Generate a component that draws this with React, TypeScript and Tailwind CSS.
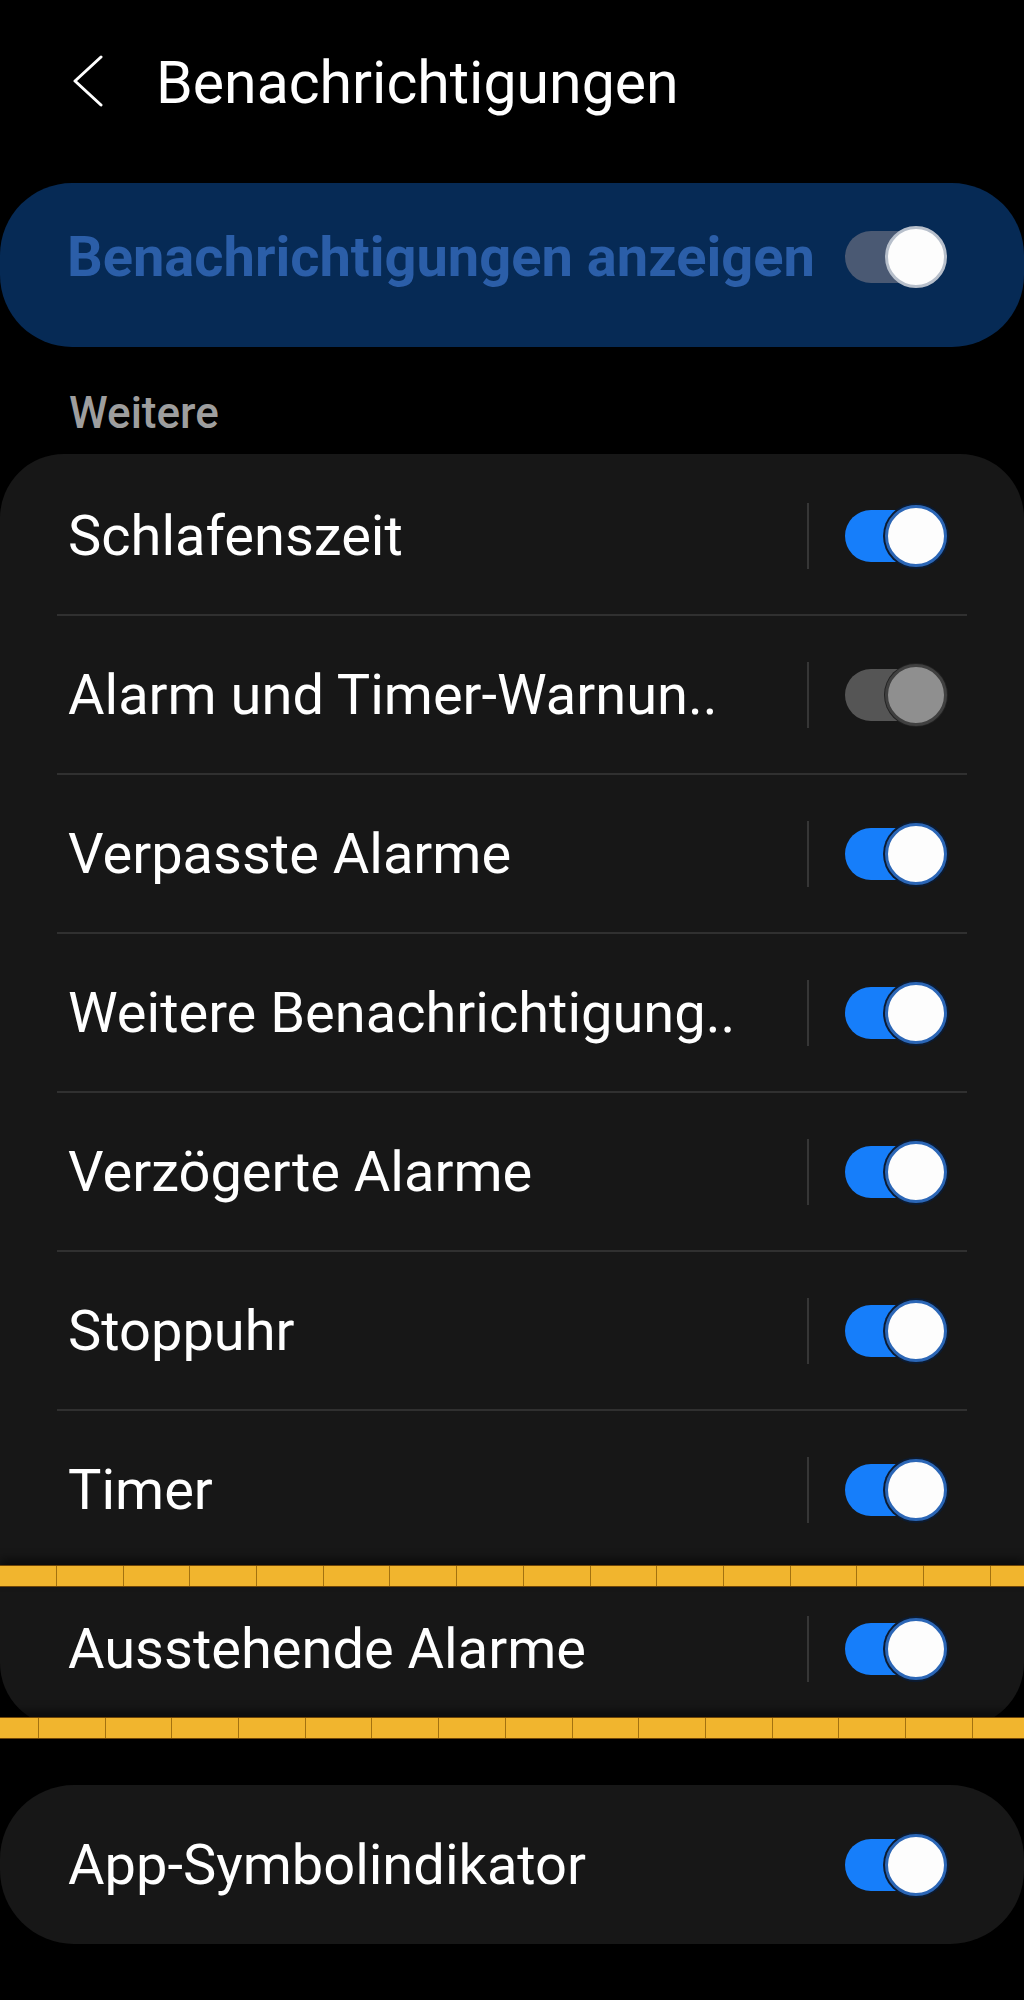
import React from 'react';

type ToggleKind = 'on' | 'off' | 'master';

const trackClass: Record<ToggleKind, string> = {
    on: 'bg-[#167efa]',
    off: 'bg-[#555555]',
    master: 'bg-[#4a5973]',
};

const thumbClass: Record<ToggleKind, string> = {
    on: 'bg-[#fdfdfd] border-[#2b66b6] shadow-[0_0_0_2px_#0c1b31]',
    off: 'bg-[#8f8f8f] border-[#404040] shadow-[0_0_0_1px_#222222]',
    master: 'bg-[#fdfdfd] border-[#b7bfcb]',
};

function Toggle({ kind }: { kind: ToggleKind }) {
    return (
        <div className="relative w-[102px] h-[62px] shrink-0">
            <div className={`absolute left-0 top-[5px] w-[96px] h-[52px] rounded-full ${trackClass[kind]}`} />
            <div className={`absolute right-0 top-0 w-[62px] h-[62px] rounded-full border-[3px] ${thumbClass[kind]}`} />
        </div>
    );
}

interface Item {
    label: string;
    on: boolean;
}

const items: Item[] = [
    { label: 'Schlafenszeit', on: true },
    { label: 'Alarm und Timer-Warnun..', on: false },
    { label: 'Verpasste Alarme', on: true },
    { label: 'Weitere Benachrichtigung..', on: true },
    { label: 'Verzögerte Alarme', on: true },
    { label: 'Stoppuhr', on: true },
    { label: 'Timer', on: true },
    { label: 'Ausstehende Alarme', on: true },
];

// yellow seam of the stitched screenshot
function Seam({ top, offset }: { top: string; offset: string }) {
    return (
        <div className={`absolute left-0 right-0 ${top} h-[22px] bg-[#f1b52e] border-y border-[#6e4508] flex ${offset} overflow-hidden shadow-[0_-6px_10px_rgba(0,0,0,0.5)]`}>
            {Array.from({ length: 16 }).map((_, i) => (
                <div key={i} className="w-[66.7px] h-full shrink-0 border-l border-[#a3720f]" />
            ))}
        </div>
    );
}

export default function App() {
    return (
        <div className="relative w-full h-[2000px] bg-black overflow-hidden font-[Roboto,sans-serif] text-white">
            {/* Header */}
            <div className="h-[165px] flex items-center">
                <svg className="ml-[72px] w-[32px] h-[56px]" viewBox="0 0 32 56" fill="none">
                    <path d="M29 2 L3 26 L29 50" stroke="#ffffff" strokeWidth="3" strokeLinecap="round" strokeLinejoin="round" />
                </svg>
                <h1 className="ml-[52px] text-[59px] leading-none font-normal">Benachrichtigungen</h1>
            </div>

            {/* Master switch */}
            <div className="mt-[18px] h-[164px] rounded-[72px] bg-[#062a55] flex items-center pl-[67px] pr-[77px] pb-[16px]">
                <span className="flex-1 text-[56px] leading-none font-bold text-[#2b5ea8] whitespace-nowrap">
                    Benachrichtigungen anzeigen
                </span>
                <Toggle kind="master" />
            </div>

            {/* Section label */}
            <div className="pt-[44px] pl-[69px] mb-[19px] text-[44px] leading-none font-medium text-[#9e9e9e]">
                Weitere
            </div>

            {/* List card */}
            <div className="rounded-[64px] bg-[#171717] pt-[3px]">
                {items.map((item, i) => (
                    <div key={item.label}>
                        {i > 0 && <div className="mx-[57px] h-[2px] bg-[#303030]" />}
                        <div className="h-[157px] flex items-center pl-[68px] pr-[77px]">
                            <span className="flex-1 text-[56px] leading-none whitespace-nowrap">{item.label}</span>
                            <div className="w-[2px] h-[66px] bg-[#363636] mr-[36px]" />
                            <Toggle kind={item.on ? 'on' : 'off'} />
                        </div>
                    </div>
                ))}
            </div>

            {/* App badge card */}
            <div className="mt-[58px] h-[159px] rounded-[74px] bg-[#171717] flex items-center pl-[68px] pr-[77px]">
                <span className="flex-1 text-[56px] leading-none whitespace-nowrap">App-Symbolindikator</span>
                <Toggle kind="on" />
            </div>

            <Seam top="top-[1565px]" offset="pl-[56px]" />
            <Seam top="top-[1717px]" offset="pl-[38px]" />
        </div>
    );
}
